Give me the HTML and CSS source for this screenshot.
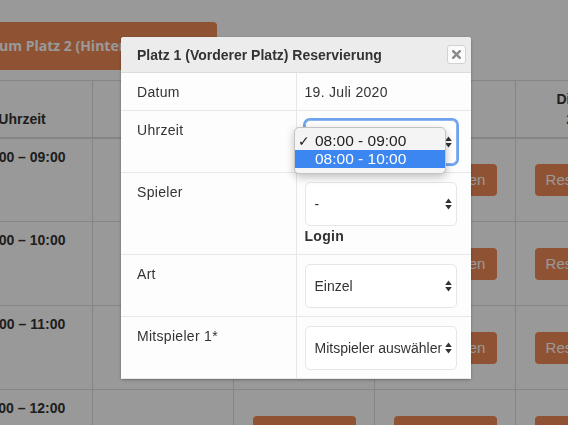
FILE: index.html
```html
<!DOCTYPE html>
<html lang="de">
<head>
<meta charset="utf-8">
<title>Reservierung</title>
<link rel="stylesheet" href="styles.css">
</head>
<body>
<div class="page">
  <div class="toolbar"><a class="btn-switch">Zum Platz 2 (Hinterer Platz)</a></div>
  <table class="plan">
    <thead>
      <tr>
        <th>Uhrzeit</th>
        <th>Samstag<br>18.07.</th>
        <th>Sonntag<br>19.07.</th>
        <th>Montag<br>20.07.</th>
        <th>Dienstag<br>21.07.</th>
      </tr>
    </thead>
    <tbody>
      <tr>
        <td class="time">08:00 – 09:00</td>
        <td class="slot"></td>
        <td class="slot"><a class="btn-res">Reservieren</a></td>
        <td class="slot"><a class="btn-res">Reservieren</a></td>
        <td class="slot"><a class="btn-res">Reservieren</a></td>
      </tr>
      <tr>
        <td class="time">09:00 – 10:00</td>
        <td class="slot"></td>
        <td class="slot"><a class="btn-res">Reservieren</a></td>
        <td class="slot"><a class="btn-res">Reservieren</a></td>
        <td class="slot"><a class="btn-res">Reservieren</a></td>
      </tr>
      <tr>
        <td class="time">10:00 – 11:00</td>
        <td class="slot"></td>
        <td class="slot"><a class="btn-res">Reservieren</a></td>
        <td class="slot"><a class="btn-res">Reservieren</a></td>
        <td class="slot"><a class="btn-res">Reservieren</a></td>
      </tr>
      <tr>
        <td class="time">11:00 – 12:00</td>
        <td class="slot"></td>
        <td class="slot"><a class="btn-res">Reservieren</a></td>
        <td class="slot"><a class="btn-res">Reservieren</a></td>
        <td class="slot"><a class="btn-res">Reservieren</a></td>
      </tr>
    </tbody>
  </table>
</div>

<div class="backdrop"></div>

<div class="modal">
  <div class="modal-header">
    <h4 class="modal-title">Platz 1 (Vorderer Platz) Reservierung</h4>
    <button class="close" type="button" aria-label="Schließen">
      <svg width="9" height="9" viewBox="0 0 9 9"><path d="M1.2 1.2 L7.8 7.8 M7.8 1.2 L1.2 7.8" stroke="#8a8a8a" stroke-width="2.4" stroke-linecap="square"/></svg>
    </button>
  </div>
  <table class="form">
    <tr>
      <td class="label">Datum</td>
      <td class="value">19. Juli 2020</td>
    </tr>
    <tr>
      <td class="label">Uhrzeit</td>
      <td class="value">
        <div class="select focus"><span class="select-text">08:00 - 09:00</span>
          <svg class="arrows" width="7" height="12" viewBox="0 0 7 12"><path d="M3.5 0.5 L6.8 5 L0.2 5 Z M0.2 7 L6.8 7 L3.5 11.5 Z" fill="#333"/></svg>
        </div>
      </td>
    </tr>
    <tr>
      <td class="label">Spieler</td>
      <td class="value">
        <div class="select"><span class="select-text">-</span>
          <svg class="arrows" width="7" height="12" viewBox="0 0 7 12"><path d="M3.5 0.5 L6.8 5 L0.2 5 Z M0.2 7 L6.8 7 L3.5 11.5 Z" fill="#333"/></svg>
        </div>
        <div class="login">Login</div>
      </td>
    </tr>
    <tr>
      <td class="label">Art</td>
      <td class="value">
        <div class="select"><span class="select-text">Einzel</span>
          <svg class="arrows" width="7" height="12" viewBox="0 0 7 12"><path d="M3.5 0.5 L6.8 5 L0.2 5 Z M0.2 7 L6.8 7 L3.5 11.5 Z" fill="#333"/></svg>
        </div>
      </td>
    </tr>
    <tr>
      <td class="label">Mitspieler 1*</td>
      <td class="value">
        <div class="select"><span class="select-text">Mitspieler auswählen</span>
          <svg class="arrows" width="7" height="12" viewBox="0 0 7 12"><path d="M3.5 0.5 L6.8 5 L0.2 5 Z M0.2 7 L6.8 7 L3.5 11.5 Z" fill="#333"/></svg>
        </div>
      </td>
    </tr>
  </table>

  <div class="menu">
    <div class="menu-item"><span class="check">✓</span>08:00 - 09:00</div>
    <div class="menu-item active">08:00 - 10:00</div>
  </div>
</div>
</body>
</html>
```

FILE: styles.css
```css
html, body {
  margin: 0;
  padding: 0;
}

body {
  width: 568px;
  height: 425px;
  overflow: hidden;
  background: #fff;
  font-family: "Liberation Sans", Arial, sans-serif;
  color: #333;
  position: relative;
}

/* background page (scrolled horizontally) */
.page {
  margin-left: -49px;
  padding-top: 22px;
  width: 760px;
}

.toolbar {
  padding-left: 24px;
  margin-bottom: 10px;
}

.btn-switch {
  display: inline-block;
  height: 48px;
  line-height: 48px;
  padding: 0 35px 0 16px;
  background: #ee8a57;
  color: #fff;
  font-family: "Open Sans", "Liberation Sans", sans-serif;
  font-weight: 700;
  font-size: 14px;
  border-radius: 4px;
}

.plan {
  border-collapse: collapse;
  table-layout: fixed;
  width: 705px;
}

.plan th,
.plan td {
  width: 141px;
  box-sizing: border-box;
  border: 1px solid #dedede;
  text-align: center;
  font-size: 14px;
  font-weight: 700;
  color: #333;
  line-height: 20px;
}

.plan th {
  height: 57px;
  padding: 0 8px 8px;
  vertical-align: bottom;
  border-bottom: 2px solid #dedede;
}

.plan td {
  height: 84px;
}

.plan td.time {
  vertical-align: top;
  padding: 8px 8px 0;
}

.plan td.slot {
  vertical-align: middle;
  padding: 0;
}

.btn-res {
  display: inline-block;
  width: 103px;
  height: 32px;
  line-height: 32px;
  box-sizing: border-box;
  background: #ee8a57;
  color: #fff;
  border-radius: 4px;
  font-size: 15px;
  font-weight: 400;
  text-align: center;
}

.backdrop {
  position: fixed;
  inset: 0;
  background: rgba(0, 0, 0, 0.4);
}

/* modal */
.modal {
  position: absolute;
  left: 121px;
  top: 37px;
  width: 350px;
  background: #fff;
  border-radius: 3px;
  box-shadow: 0 1px 3px rgba(0, 0, 0, 0.3);
}

.modal-header {
  height: 35px;
  display: flex;
  align-items: center;
  justify-content: space-between;
  padding: 0 5px 0 16px;
  background: #ececec;
  border-bottom: 1px solid #dcdcdc;
  border-radius: 3px 3px 0 0;
}

.modal-title {
  margin: 0;
  font-size: 14px;
  font-weight: 700;
  color: #333;
}

.close {
  width: 19px;
  height: 19px;
  box-sizing: border-box;
  padding: 0;
  display: flex;
  align-items: center;
  justify-content: center;
  background: #fbfbfb;
  border: 1px solid #d2d2d2;
  border-radius: 3px;
}

.form {
  width: 100%;
  border-collapse: collapse;
  table-layout: fixed;
  font-size: 14px;
  letter-spacing: 0.3px;
  color: #333;
}

.form td {
  border-bottom: 1px solid #e7e7e7;
  vertical-align: top;
  line-height: 20px;
  background: #fdfdfd;
}

.form td.label {
  width: 175px;
  box-sizing: border-box;
  padding: 9px 16px 7px;
  border-right: 1px solid #e7e7e7;
}

.form td.value {
  padding: 9px 15px 8px 8px;
}

.select {
  width: 152px;
  height: 44px;
  box-sizing: border-box;
  display: flex;
  align-items: center;
  gap: 3px;
  padding: 0 4px 0 9px;
  background: #fff;
  border: 1px solid #e6e6e6;
  border-radius: 5px;
  white-space: nowrap;
  letter-spacing: 0;
}

.select-text {
  flex: 1;
  min-width: 0;
  overflow: hidden;
}

.arrows {
  flex: none;
}

.select.focus {
  border-color: #8db6f0;
  box-shadow: 0 0 0 2px #6da3ee;
}

.login {
  font-weight: 700;
}

/* native dropdown menu */
.menu {
  position: absolute;
  left: 173px;
  top: 90px;
  width: 152px;
  box-sizing: border-box;
  padding: 4px 0 5px;
  background: #f4f4f4;
  border: 1px solid #c4c4c4;
  border-radius: 5px;
  box-shadow: 0 3px 8px rgba(0, 0, 0, 0.25);
  font-size: 15.5px;
  color: #222;
}

.menu-item {
  position: relative;
  height: 18px;
  line-height: 18px;
  padding-left: 20px;
}

.menu-item .check {
  position: absolute;
  left: 3px;
  top: 0;
  font-family: "DejaVu Sans", sans-serif;
  font-size: 14px;
}

.menu-item.active {
  background: #3b86f0;
  color: #fff;
}
```
